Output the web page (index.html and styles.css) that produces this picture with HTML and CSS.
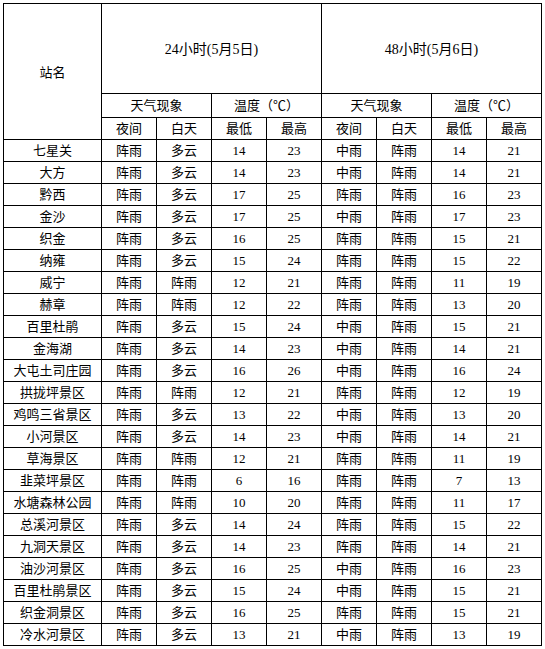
FILE: index.html
```html
<!DOCTYPE html>
<html lang="zh">
<head>
<meta charset="utf-8">
<title>天气预报</title>
<link rel="stylesheet" href="styles.css">
</head>
<body>
<div class="sheet">
  <div class="c name-h">站名</div>
  <div class="c day1">24小时(5月5日)</div>
  <div class="c day2">48小时(5月6日)</div>
  <div class="c w1">天气现象</div>
  <div class="c t1">温度（℃）</div>
  <div class="c w2">天气现象</div>
  <div class="c t2">温度（℃）</div>
  <div class="c">夜间</div><div class="c">白天</div><div class="c">最低</div><div class="c">最高</div>
  <div class="c">夜间</div><div class="c">白天</div><div class="c">最低</div><div class="c">最高</div>

  <div class="c">七星关</div><div class="c">阵雨</div><div class="c">多云</div><div class="c">14</div><div class="c">23</div><div class="c">中雨</div><div class="c">阵雨</div><div class="c">14</div><div class="c">21</div>
  <div class="c">大方</div><div class="c">阵雨</div><div class="c">多云</div><div class="c">14</div><div class="c">23</div><div class="c">中雨</div><div class="c">阵雨</div><div class="c">14</div><div class="c">21</div>
  <div class="c">黔西</div><div class="c">阵雨</div><div class="c">多云</div><div class="c">17</div><div class="c">25</div><div class="c">阵雨</div><div class="c">阵雨</div><div class="c">16</div><div class="c">23</div>
  <div class="c">金沙</div><div class="c">阵雨</div><div class="c">多云</div><div class="c">17</div><div class="c">25</div><div class="c">中雨</div><div class="c">阵雨</div><div class="c">17</div><div class="c">23</div>
  <div class="c">织金</div><div class="c">阵雨</div><div class="c">多云</div><div class="c">16</div><div class="c">25</div><div class="c">阵雨</div><div class="c">阵雨</div><div class="c">15</div><div class="c">21</div>
  <div class="c">纳雍</div><div class="c">阵雨</div><div class="c">多云</div><div class="c">15</div><div class="c">24</div><div class="c">阵雨</div><div class="c">阵雨</div><div class="c">15</div><div class="c">22</div>
  <div class="c">威宁</div><div class="c">阵雨</div><div class="c">阵雨</div><div class="c">12</div><div class="c">21</div><div class="c">阵雨</div><div class="c">阵雨</div><div class="c">11</div><div class="c">19</div>
  <div class="c">赫章</div><div class="c">阵雨</div><div class="c">阵雨</div><div class="c">12</div><div class="c">22</div><div class="c">阵雨</div><div class="c">阵雨</div><div class="c">13</div><div class="c">20</div>
  <div class="c">百里杜鹃</div><div class="c">阵雨</div><div class="c">多云</div><div class="c">15</div><div class="c">24</div><div class="c">中雨</div><div class="c">阵雨</div><div class="c">15</div><div class="c">21</div>
  <div class="c">金海湖</div><div class="c">阵雨</div><div class="c">多云</div><div class="c">14</div><div class="c">23</div><div class="c">中雨</div><div class="c">阵雨</div><div class="c">14</div><div class="c">21</div>
  <div class="c">大屯土司庄园</div><div class="c">阵雨</div><div class="c">多云</div><div class="c">16</div><div class="c">26</div><div class="c">中雨</div><div class="c">阵雨</div><div class="c">16</div><div class="c">24</div>
  <div class="c">拱拢坪景区</div><div class="c">阵雨</div><div class="c">阵雨</div><div class="c">12</div><div class="c">21</div><div class="c">阵雨</div><div class="c">阵雨</div><div class="c">12</div><div class="c">19</div>
  <div class="c">鸡鸣三省景区</div><div class="c">阵雨</div><div class="c">多云</div><div class="c">13</div><div class="c">22</div><div class="c">中雨</div><div class="c">阵雨</div><div class="c">13</div><div class="c">20</div>
  <div class="c">小河景区</div><div class="c">阵雨</div><div class="c">多云</div><div class="c">14</div><div class="c">23</div><div class="c">中雨</div><div class="c">阵雨</div><div class="c">14</div><div class="c">21</div>
  <div class="c">草海景区</div><div class="c">阵雨</div><div class="c">阵雨</div><div class="c">12</div><div class="c">21</div><div class="c">阵雨</div><div class="c">阵雨</div><div class="c">11</div><div class="c">19</div>
  <div class="c">韭菜坪景区</div><div class="c">阵雨</div><div class="c">阵雨</div><div class="c">6</div><div class="c">16</div><div class="c">阵雨</div><div class="c">阵雨</div><div class="c">7</div><div class="c">13</div>
  <div class="c">水塘森林公园</div><div class="c">阵雨</div><div class="c">阵雨</div><div class="c">10</div><div class="c">20</div><div class="c">阵雨</div><div class="c">阵雨</div><div class="c">11</div><div class="c">17</div>
  <div class="c">总溪河景区</div><div class="c">阵雨</div><div class="c">多云</div><div class="c">14</div><div class="c">24</div><div class="c">阵雨</div><div class="c">阵雨</div><div class="c">15</div><div class="c">22</div>
  <div class="c">九洞天景区</div><div class="c">阵雨</div><div class="c">多云</div><div class="c">14</div><div class="c">23</div><div class="c">阵雨</div><div class="c">阵雨</div><div class="c">14</div><div class="c">21</div>
  <div class="c">油沙河景区</div><div class="c">阵雨</div><div class="c">多云</div><div class="c">16</div><div class="c">25</div><div class="c">中雨</div><div class="c">阵雨</div><div class="c">16</div><div class="c">23</div>
  <div class="c">百里杜鹃景区</div><div class="c">阵雨</div><div class="c">多云</div><div class="c">15</div><div class="c">24</div><div class="c">中雨</div><div class="c">阵雨</div><div class="c">15</div><div class="c">21</div>
  <div class="c">织金洞景区</div><div class="c">阵雨</div><div class="c">多云</div><div class="c">16</div><div class="c">25</div><div class="c">阵雨</div><div class="c">阵雨</div><div class="c">15</div><div class="c">21</div>
  <div class="c">冷水河景区</div><div class="c">阵雨</div><div class="c">多云</div><div class="c">13</div><div class="c">21</div><div class="c">中雨</div><div class="c">阵雨</div><div class="c">13</div><div class="c">19</div>
</div>
</body>
</html>
```

FILE: styles.css
```css
html, body {
  margin: 0;
  padding: 0;
  background: #ffffff;
}

body {
  padding: 3px 0 0 3px;
  font-family: "Liberation Serif", "Noto Sans CJK SC", serif;
  font-size: 13px;
  color: #000000;
}

.sheet {
  display: grid;
  grid-template-columns: 97px repeat(8, 54px);
  grid-template-rows: 89px 23px 21px repeat(23, 21px);
  gap: 1px;
  padding: 1px;
  width: max-content;
  background: #000000;
}

.c {
  background: #ffffff;
  display: flex;
  align-items: center;
  justify-content: center;
  line-height: 1;
  white-space: nowrap;
}

.name-h {
  grid-row: 1 / 4;
  grid-column: 1;
  padding-top: 2px;
}

.day1,
.day2 {
  grid-row: 1;
  font-size: 14px;
  padding-top: 2px;
}

.day1 { grid-column: 2 / 6; }
.day2 { grid-column: 6 / 10; }

.w1 { grid-column: 2 / 4; }
.t1 { grid-column: 4 / 6; }
.w2 { grid-column: 6 / 8; }
.t2 { grid-column: 8 / 10; }
```
